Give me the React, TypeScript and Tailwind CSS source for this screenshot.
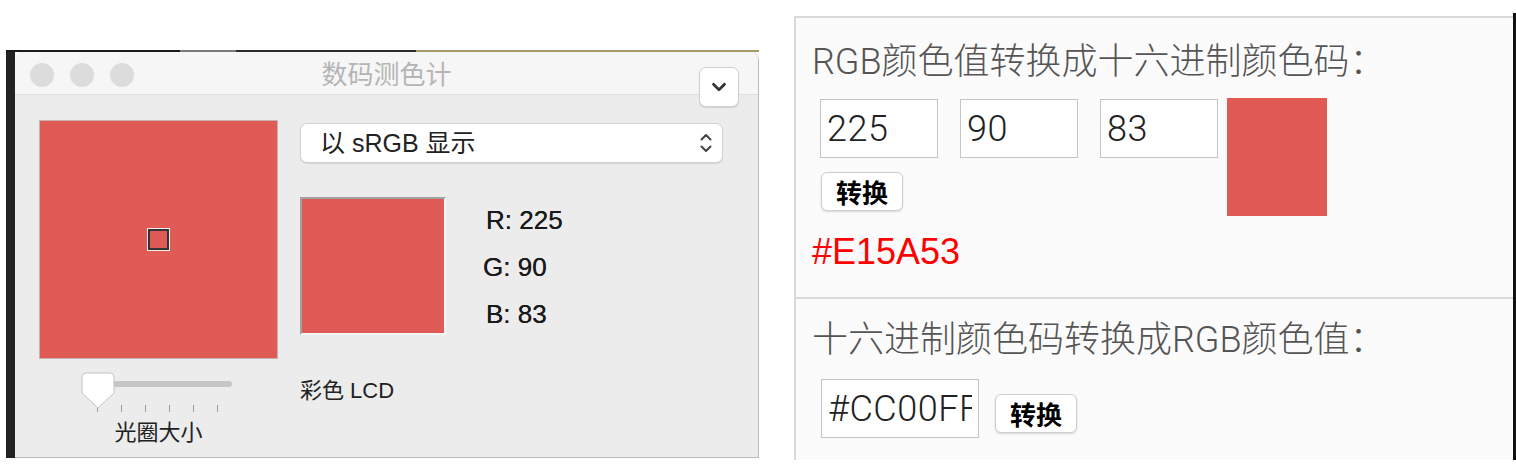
import { ChevronDown } from "lucide-react";

const red = "bg-[#e05b55]";

function ColorMeter() {
  return (
    <div className="ml-[6px] mt-[50px] flex flex-col">
      {/* desktop edge behind the window */}
      <div className="flex h-[2px] w-[753px]">
        <div className="w-[174px] bg-[#1b1b1b]" />
        <div className="w-[56px] bg-[#7a7a7a]" />
        <div className="w-[180px] bg-[#2a2a2a]" />
        <div className="flex-1 bg-[#a39a6c]" />
      </div>

      <div className="flex">
        <div className="w-[9px] bg-[#222222]" />

        {/* window */}
        <div className="relative flex h-[406px] w-[744px] flex-col overflow-hidden rounded-t-[8px] border-r border-b border-[#bcbcbc] font-['Liberation_Sans','Noto_Sans_CJK_SC',sans-serif]">
          <div className="grid h-[43px] grid-cols-[1fr_auto_1fr] items-center border-b border-[#dedede] bg-[#f6f6f6] pt-[4px]">
            <div className="flex gap-[16px] pl-[15px]">
              <span className="h-6 w-6 rounded-full bg-[#dcdcdc]" />
              <span className="h-6 w-6 rounded-full bg-[#dcdcdc]" />
              <span className="h-6 w-6 rounded-full bg-[#dcdcdc]" />
            </div>
            <div className="text-[26px] leading-none text-[#b5b5b5]">数码测色计</div>
            <div />
          </div>

          {/* collapse button */}
          <div className="absolute left-[684px] top-[15px] flex h-[40px] w-[40px] items-center justify-center rounded-[7px] border border-[#cfcfcf] bg-white shadow-[0_1px_1px_rgba(0,0,0,0.12)]">
            <ChevronDown size={22} strokeWidth={3} className="text-[#333]" />
          </div>

          <div className="flex flex-1 bg-[#ececec] pl-[24px] pt-[25px]">
            {/* loupe */}
            <div className="flex w-[239px] flex-col">
              <div className={`flex h-[239px] w-[239px] items-center justify-center border border-[#c7b3b2] ${red}`}>
                <div className="border border-[#eeeeee]">
                  <div className={`h-[21px] w-[21px] border-2 border-[#333] ${red}`} />
                </div>
              </div>

              <div className="relative mt-[14px] h-[39px]">
                <div className="ml-[44px] mt-[8px] h-[6px] w-[149px] rounded-full bg-[#c6c6c6]" />
                <div className="ml-[58px] mt-[18px] flex gap-[23px]">
                  {[0, 1, 2, 3, 4, 5].map((i) => (
                    <span key={i} className="h-[7px] w-px bg-[#9a9a9a]" />
                  ))}
                </div>
                <svg
                  className="absolute left-[42px] top-[-1px]"
                  width="34"
                  height="38"
                  viewBox="0 0 34 38"
                >
                  <path
                    d="M5 1H29Q33 1 33 5V21L17 36L1 21V5Q1 1 5 1Z"
                    fill="#ffffff"
                    stroke="#c4c4c4"
                    strokeWidth="1"
                  />
                </svg>
              </div>
              <div className="mt-[8px] text-center text-[22px] leading-[26px] text-[#222]">光圈大小</div>
            </div>

            {/* readout */}
            <div className="ml-[22px] flex w-[423px] flex-col">
              <div className="mt-[3px] flex h-[40px] items-center justify-between rounded-[7px] border border-[#d2d2d2] bg-white pl-[19px] pr-[10px] shadow-[0_1px_1px_rgba(0,0,0,0.1)]">
                <span className="text-[25px] leading-none text-[#222]">以 sRGB 显示</span>
                <svg width="12" height="22" viewBox="0 0 12 22" fill="none" stroke="#444" strokeWidth="2" strokeLinecap="round" strokeLinejoin="round">
                  <path d="M1.5 7.5L6 3L10.5 7.5" />
                  <path d="M1.5 14.5L6 19L10.5 14.5" />
                </svg>
              </div>

              <div className="mt-[34px] flex">
                <div className="h-[138px] w-[146px] border-2 border-t-[#a2a2a2] border-l-[#a2a2a2] border-r-[#f6f6f6] border-b-[#f6f6f6]">
                  <div className={`h-full w-full ${red}`} />
                </div>
                <div className="ml-[40px] flex flex-col text-[26px] leading-[47px] text-[#1a1a1a] [text-shadow:0_0_0.4px_#1a1a1a]">
                  <span>R: 225</span>
                  <span className="-ml-[3px]">G: 90</span>
                  <span>B: 83</span>
                </div>
              </div>

              <div className="mt-[40px] text-[22px] leading-[26px] text-[#222]">彩色 LCD</div>
            </div>
          </div>
        </div>
      </div>
    </div>
  );
}

function Button() {
  return (
    <button className="flex h-[39px] w-[82px] items-center justify-center rounded-[6px] border border-[#cfcfcf] bg-white font-['Noto_Sans_CJK_SC',sans-serif] text-[26px] font-bold leading-none text-black shadow-[0_1px_2px_rgba(0,0,0,0.15)]">
      转换
    </button>
  );
}

function Field({ value, width }: { value: string; width: string }) {
  return (
    <input
      readOnly
      value={value}
      className={`${width} h-[59px] border border-[#c4c4c4] bg-white px-[6px] font-['Roboto','Noto_Sans_CJK_SC',sans-serif] text-[36px] font-light tracking-[0.5px] text-[#222] outline-none`}
    />
  );
}

function Converter() {
  const heading =
    "h-[40px] whitespace-nowrap font-['Roboto','Noto_Sans_CJK_SC',sans-serif] text-[36px] font-light leading-[40px] text-[#555]";

  return (
    <div className="ml-[35px] mt-[13px] flex items-start">
      <div className="mt-[3px] flex h-[444px] w-[719px] flex-col border-l-2 border-t-2 border-[#dadada] bg-[#fbfbfb]">
        {/* rgb -> hex */}
        <div className="pl-[16px]">
          <div className={`mt-[24px] ${heading}`}>RGB颜色值转换成十六进制颜色码：</div>
          <div className="mt-[16px] flex">
            <div className="flex flex-col">
              <div className="ml-[8px] mt-[1px] flex gap-[22px]">
                <Field value="225" width="w-[118px]" />
                <Field value="90" width="w-[118px]" />
                <Field value="83" width="w-[118px]" />
              </div>
              <div className="ml-[9px] mt-[14px]">
                <Button />
              </div>
            </div>
            <div className="ml-[9px] h-[118px] w-[100px] bg-[#e15a53]" />
          </div>
          <div className="mt-[16px] h-[40px] font-['Liberation_Sans',sans-serif] text-[36px] leading-[40px] text-[#ff0000]">
            #E15A53
          </div>
        </div>

        <div className="mt-[25px] h-[2px] bg-[#dadada]" />

        {/* hex -> rgb */}
        <div className="pl-[16px]">
          <div className={`mt-[21px] ${heading}`}>十六进制颜色码转换成RGB颜色值：</div>
          <div className="mt-[19px] flex items-start">
            <div className="ml-[9px]">
              <Field value="#CC00FF" width="w-[158px]" />
            </div>
            <div className="ml-[16px] mt-[15px]">
              <Button />
            </div>
          </div>
        </div>
      </div>
      <div className="h-[447px] w-[3px] bg-[#111]" />
    </div>
  );
}

export default function App() {
  return (
    <div className="flex h-[472px] w-[1516px] items-start overflow-hidden bg-white">
      <ColorMeter />
      <Converter />
    </div>
  );
}
